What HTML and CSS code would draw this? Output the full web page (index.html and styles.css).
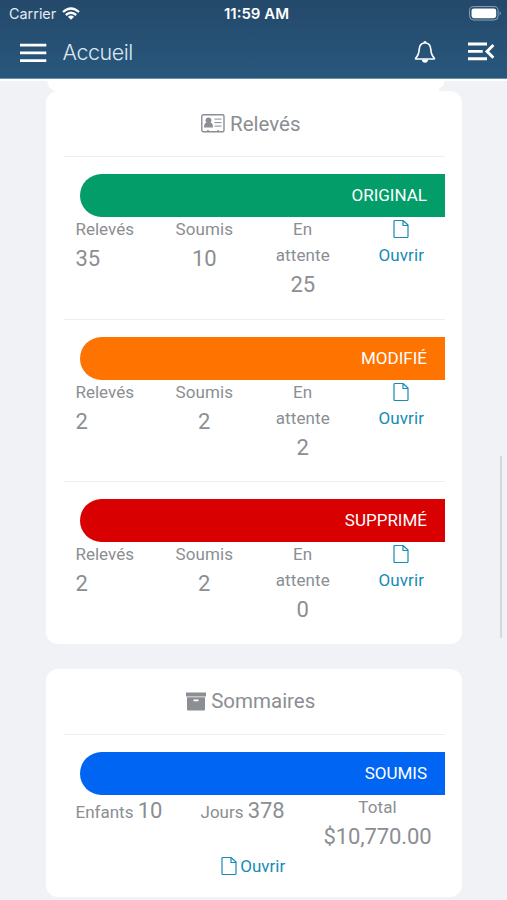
FILE: index.html
```html
<!DOCTYPE html>
<html lang="fr">
<head>
<meta charset="utf-8">
<title>Accueil</title>
<link rel="stylesheet" href="styles.css">
</head>
<body>
<svg class="sprite" aria-hidden="true">
  <symbol id="file" viewBox="0 0 16 20"><path d="M2 1.5H10L15 6V17.5Q15 18.5 14 18.5H2Q1 18.5 1 17.5V2.5Q1 1.5 2 1.5ZM10 1.5V6.5H15" fill="none" stroke="currentColor" stroke-width="1.2" stroke-linejoin="round"/></symbol>
</svg>
<header class="top">
  <div class="status">
    <div class="carrier"><span>Carrier</span>
      <svg class="wifi" width="18" height="14" viewBox="0 0 18 14" fill="none" stroke="currentColor" stroke-width="2.3"><path d="M1 5Q9 -2 17 5M3.8 8Q9 3.6 14.2 8"/><path d="M9 12.8L5.9 9.7Q9 7.2 12.1 9.7Z" fill="currentColor" stroke="none"/></svg>
    </div>
    <div class="clock">11:59 AM</div>
    <svg class="battery" width="33" height="15" viewBox="0 0 33 15"><rect x=".6" y=".6" width="28.5" height="13.4" rx="4" fill="none" stroke="#8ea4b6" stroke-width="1"/><rect x="2.5" y="2.4" width="24.7" height="9.8" rx="2.4" fill="#fff"/><path d="M30.7 5.2Q33 7.3 30.7 9.4Z" fill="#8ea4b6"/></svg>
  </div>
  <nav class="nav">
    <svg class="menu" width="27" height="20" viewBox="0 0 27 20" stroke="currentColor" stroke-width="2.8"><path d="M0 2.2H26.3M0 9.9H26.3M0 17.6H26.3"/></svg>
    <h1 class="page-title">Accueil</h1>
    <svg class="bell" width="22" height="24" viewBox="0 0 22 24" fill="none" stroke="currentColor" stroke-width="1.6" stroke-linejoin="round"><path d="M11 3C7.3 3 5.4 5.7 5.2 9.4C5 14 4.2 15.5 1.6 18.2V19H20.4V18.2C17.8 15.5 17 14 16.8 9.4C16.6 5.7 14.7 3 11 3Z"/><path d="M9.3 3Q9.3 1 11 1T12.7 3ZM7.8 19.5H14.2Q13.7 22.8 11 22.8T7.8 19.5Z" fill="currentColor" stroke="none"/></svg>
    <svg class="collapse" width="27" height="20" viewBox="0 0 27 20" fill="none" stroke="currentColor" stroke-width="2.9"><path d="M0 2H19M0 9.4H14.7M0 16.8H19M25.4 3L19 9.4L25.4 15.8"/></svg>
  </nav>
</header>
<main class="content">
  <div class="previous"></div>
  <section class="card">
    <h2 class="heading"><svg width="24" height="19" viewBox="0 0 24 19"><rect x=".8" y=".8" width="22.2" height="17" rx="1.5" fill="none" stroke="currentColor" stroke-width="1.4"/><circle cx="7.5" cy="6.3" r="2.9" fill="currentColor"/><path d="M3 13.4Q3 8.6 6 8.6H9Q12 8.6 12 13.4ZM6 18V16.3H8V18ZM16 18V16.3H18V18Z" fill="currentColor"/><path d="M13.5 5.1H20.5M13.5 8.6H20.5M13.5 12.1H20.5" stroke="currentColor" stroke-width="1"/></svg><span>Relevés</span></h2>
    <article class="group">
      <div class="bar green">ORIGINAL</div>
      <div class="stats">
        <div class="stat first"><span>Relevés</span><b>35</b></div>
        <div class="stat"><span>Soumis</span><b>10</b></div>
        <div class="stat"><span>En<br>attente</span><b>25</b></div>
        <a class="stat open"><svg width="16" height="20"><use href="#file"/></svg><span>Ouvrir</span></a>
      </div>
    </article>
    <article class="group">
      <div class="bar orange">MODIFIÉ</div>
      <div class="stats">
        <div class="stat first"><span>Relevés</span><b>2</b></div>
        <div class="stat"><span>Soumis</span><b>2</b></div>
        <div class="stat"><span>En<br>attente</span><b>2</b></div>
        <a class="stat open"><svg width="16" height="20"><use href="#file"/></svg><span>Ouvrir</span></a>
      </div>
    </article>
    <article class="group">
      <div class="bar red">SUPPRIMÉ</div>
      <div class="stats">
        <div class="stat first"><span>Relevés</span><b>2</b></div>
        <div class="stat"><span>Soumis</span><b>2</b></div>
        <div class="stat"><span>En<br>attente</span><b>0</b></div>
        <a class="stat open"><svg width="16" height="20"><use href="#file"/></svg><span>Ouvrir</span></a>
      </div>
    </article>
  </section>
  <section class="card summary">
    <h2 class="heading"><svg width="20" height="19" viewBox="0 0 20 19" fill="currentColor"><path d="M0 .5H20V4.5H0ZM1 5.2H19V17.5Q19 18.5 18 18.5H2Q1 18.5 1 17.5ZM7.5 7.5V9.2H12.5V7.5Z" fill-rule="evenodd"/></svg><span>Sommaires</span></h2>
    <article class="group">
      <div class="bar blue">SOUMIS</div>
      <div class="totals">
        <div class="pair">Enfants <b>10</b></div>
        <div class="pair">Jours <b>378</b></div>
        <div class="stat"><span>Total</span><b>$10,770.00</b></div>
      </div>
      <a class="link"><svg width="16" height="20"><use href="#file"/></svg><span>Ouvrir</span></a>
    </article>
  </section>
  <div class="scrollbar"></div>
</main>
</body>
</html>
```
FILE: styles.css
```css
* { box-sizing: border-box; }
body { margin: 0; height: 900px; overflow: hidden; background: #f0f2f6; color: #8b8e92; font: 17px/26px Roboto, sans-serif; }
h1, h2 { margin: 0; font-weight: 400; }
b { font-weight: 400; font-size: 22px; letter-spacing: -.1px; }
svg { display: block; flex: none; }
.sprite { position: absolute; width: 0; height: 0; }
.top { height: 79px; background: linear-gradient(#24496a, #28577d); border-bottom: 1px solid #6f8fa8; color: #fff; }
.status { height: 28px; display: grid; grid-template-columns: 1fr 1fr 1fr; align-items: center; padding: 0 5px 0 9px; font: 14.4px/18px Inter, sans-serif; }
.carrier { display: flex; align-items: center; gap: 6px; color: #e3eaf1; }
.wifi { color: #fff; }
.clock { padding-left: 2px; text-align: center; font-weight: 600; font-size: 15px; }
.battery { justify-self: end; margin-top: -2px; }
.nav { height: 50px; display: flex; align-items: center; padding: 0 12px 2px 20px; }
.menu { margin-top: 1px; }
.page-title { margin: -1px 0 0 15.5px; font: 300 21.5px/28px Inter, sans-serif; letter-spacing: -.45px; color: #dce7f1; }
.bell { margin-left: auto; }
.collapse { margin-left: 32px; }
.content { position: relative; height: 821px; padding: 0 45.5px 0 46px; border-top: 2px solid #fff; }
.previous { height: 10px; background: #fff; clip-path: polygon(1px 0, 399px 0, 397px 5px, 393px 8px, 393px 10px, 8px 10px, 3px 6px); }
.card { height: 552.5px; padding: 0 17px 0 18px; border-radius: 12px; background: #fff; }
.heading { height: 65px; display: flex; justify-content: center; align-items: center; gap: 5px; margin-left: -7px; font-size: 20.5px; }
.group { height: 162.5px; border-top: 1.5px solid #edeef1; padding-top: 17px; }
.bar { height: 43px; margin-left: 16px; padding-right: 17.5px; border-radius: 22px 0 0 22px; color: #fff; text-align: right; line-height: 43px; font-size: 17px; }
.green { background: #039d69; }
.orange { background: #ff7300; }
.red { background: #d80000; }
.blue { background: #0065f2; }
.stats { display: grid; grid-template-columns: 91px repeat(3, 98.5px); margin: -1px -6px 0 0; }
.stat { display: flex; flex-direction: column; align-items: center; text-align: center; letter-spacing: .1px; }
.stat b { line-height: 33px; }
.first { align-items: flex-start; padding-left: 11.5px; letter-spacing: 0; }
.open, .link { color: #168bb8; }
.open svg { margin: 3px 0; }
.summary { margin-top: 25px; height: 228px; }
.totals { display: grid; grid-template-columns: 125px 109px 1fr; padding-left: 11.5px; }
.totals .stat { margin: -1px -1px 0 0; }
.pair { line-height: 31px; }
.link { display: flex; justify-content: center; align-items: center; gap: 3px; margin-left: -2px; }
.scrollbar { position: absolute; right: 5px; top: 375px; width: 2px; height: 182px; border-radius: 1px; background: #d5d7dc; }
```
